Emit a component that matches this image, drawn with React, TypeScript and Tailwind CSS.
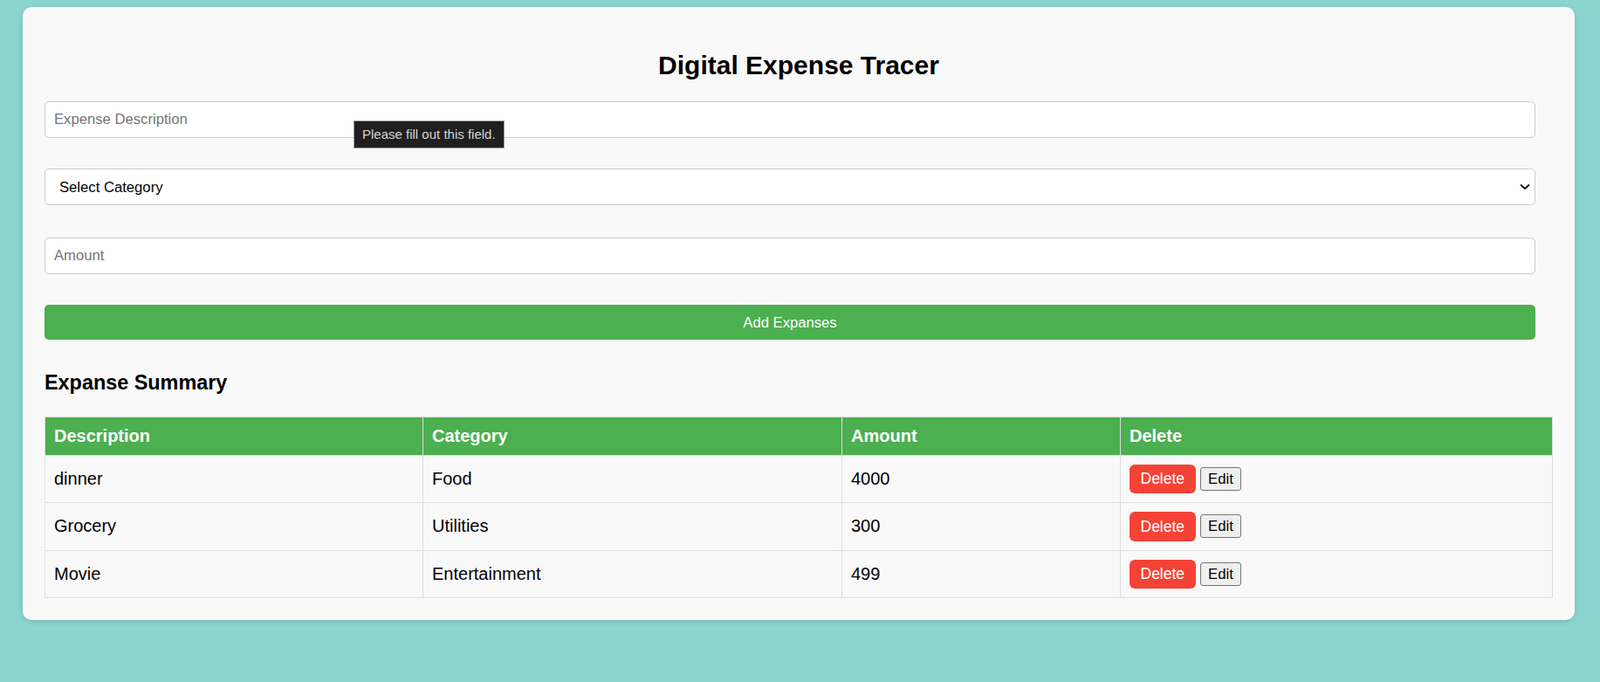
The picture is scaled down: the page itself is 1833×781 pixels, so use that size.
import React from "react";

export default function App() {
  const rows = [
    { d: "dinner", c: "Food", a: "4000" },
    { d: "Grocery", c: "Utilities", a: "300" },
    { d: "Movie", c: "Entertainment", a: "499" },
  ];
  return (
    <div className="min-h-[781px] w-full bg-[#8cd4d0] pt-[8px] pl-[26px] pr-[29px] pb-[40px] font-['Liberation_Sans',Arial,sans-serif] text-black">
      <div className="w-full bg-[#f9f9f9] rounded-[10px] shadow-[0_2px_6px_rgba(0,0,0,0.12)] p-[25px]">
        <h1 className="mt-[24px] mb-[24px] text-center text-[30px] font-bold leading-[35px]">
          Digital Expense Tracer
        </h1>
        <div className="w-[1708px]">
          <div className="relative">
            <input
              placeholder="Expense Description"
              className="block w-full h-[41.5px] px-[10px] border border-[#ccc] rounded-[5px] bg-white text-[16.67px] placeholder:text-[#757575] outline-none"
            />
            <div className="absolute left-[354px] top-[22px] h-[31.5px] px-[9px] flex items-center bg-[#1f1f1f] border border-[#9c9c9c] text-[#d6d6d6] text-[15px] whitespace-nowrap z-10">
              Please fill out this field.
            </div>
          </div>
          <div className="relative mt-[35.5px]">
            <select
              defaultValue=""
              className="appearance-none block w-full h-[42px] pl-[16px] pr-[30px] border border-[#ccc] rounded-[5px] bg-white text-[16.67px] text-black outline-none"
            >
              <option value="">Select Category</option>
              <option value="Food">Food</option>
              <option value="Utilities">Utilities</option>
              <option value="Entertainment">Entertainment</option>
            </select>
            <svg
              className="absolute right-[6px] top-1/2 -translate-y-1/2 pointer-events-none"
              width="12"
              height="7"
              viewBox="0 0 12 7"
            >
              <polyline points="1,1 6,5.5 11,1" fill="none" stroke="#111" strokeWidth="2" />
            </svg>
          </div>
          <input
            placeholder="Amount"
            className="mt-[37px] block w-full h-[41.5px] px-[10px] border border-[#ccc] rounded-[5px] bg-white text-[16.67px] placeholder:text-[#757575] outline-none"
          />
          <button className="mt-[35.5px] block w-full h-[40px] bg-[#4caf50] text-white text-[16.67px] rounded-[5px]">
            Add Expanses
          </button>
        </div>
        <h3 className="mt-[35.5px] mb-[25px] text-[23.4px] font-bold leading-[27px]">Expanse Summary</h3>
        <table className="w-full border-collapse table-fixed">
          <colgroup>
            <col className="w-[433px]" />
            <col className="w-[480px]" />
            <col className="w-[319px]" />
            <col />
          </colgroup>
          <thead>
            <tr>
              {["Description", "Category", "Amount", "Delete"].map((h) => (
                <th
                  key={h}
                  className="bg-[#4caf50] text-white text-left text-[20px] font-bold p-[10px] border border-[#ddd] leading-[23px]"
                >
                  {h}
                </th>
              ))}
            </tr>
          </thead>
          <tbody>
            {rows.map((r) => (
              <tr key={r.d}>
                <td className="p-[10px] border border-[#ddd] text-[20px] leading-[23px]">{r.d}</td>
                <td className="p-[10px] border border-[#ddd] text-[20px] leading-[23px]">{r.c}</td>
                <td className="p-[10px] border border-[#ddd] text-[20px] leading-[23px]">{r.a}</td>
                <td className="p-[10px] border border-[#ddd] text-[20px] leading-[23px]">
                  <div className="flex items-center gap-[5px]">
                    <button className="h-[33.5px] px-[12.5px] rounded-[6px] bg-[#f44336] text-white text-[17.5px] leading-[20px]">
                      Delete
                    </button>
                    <button className="h-[27px] px-[8.5px] border border-[#767676] rounded-[3px] bg-[#efefef] text-[16.67px] leading-[19px] text-black">
                      Edit
                    </button>
                  </div>
                </td>
              </tr>
            ))}
          </tbody>
        </table>
      </div>
    </div>
  );
}
